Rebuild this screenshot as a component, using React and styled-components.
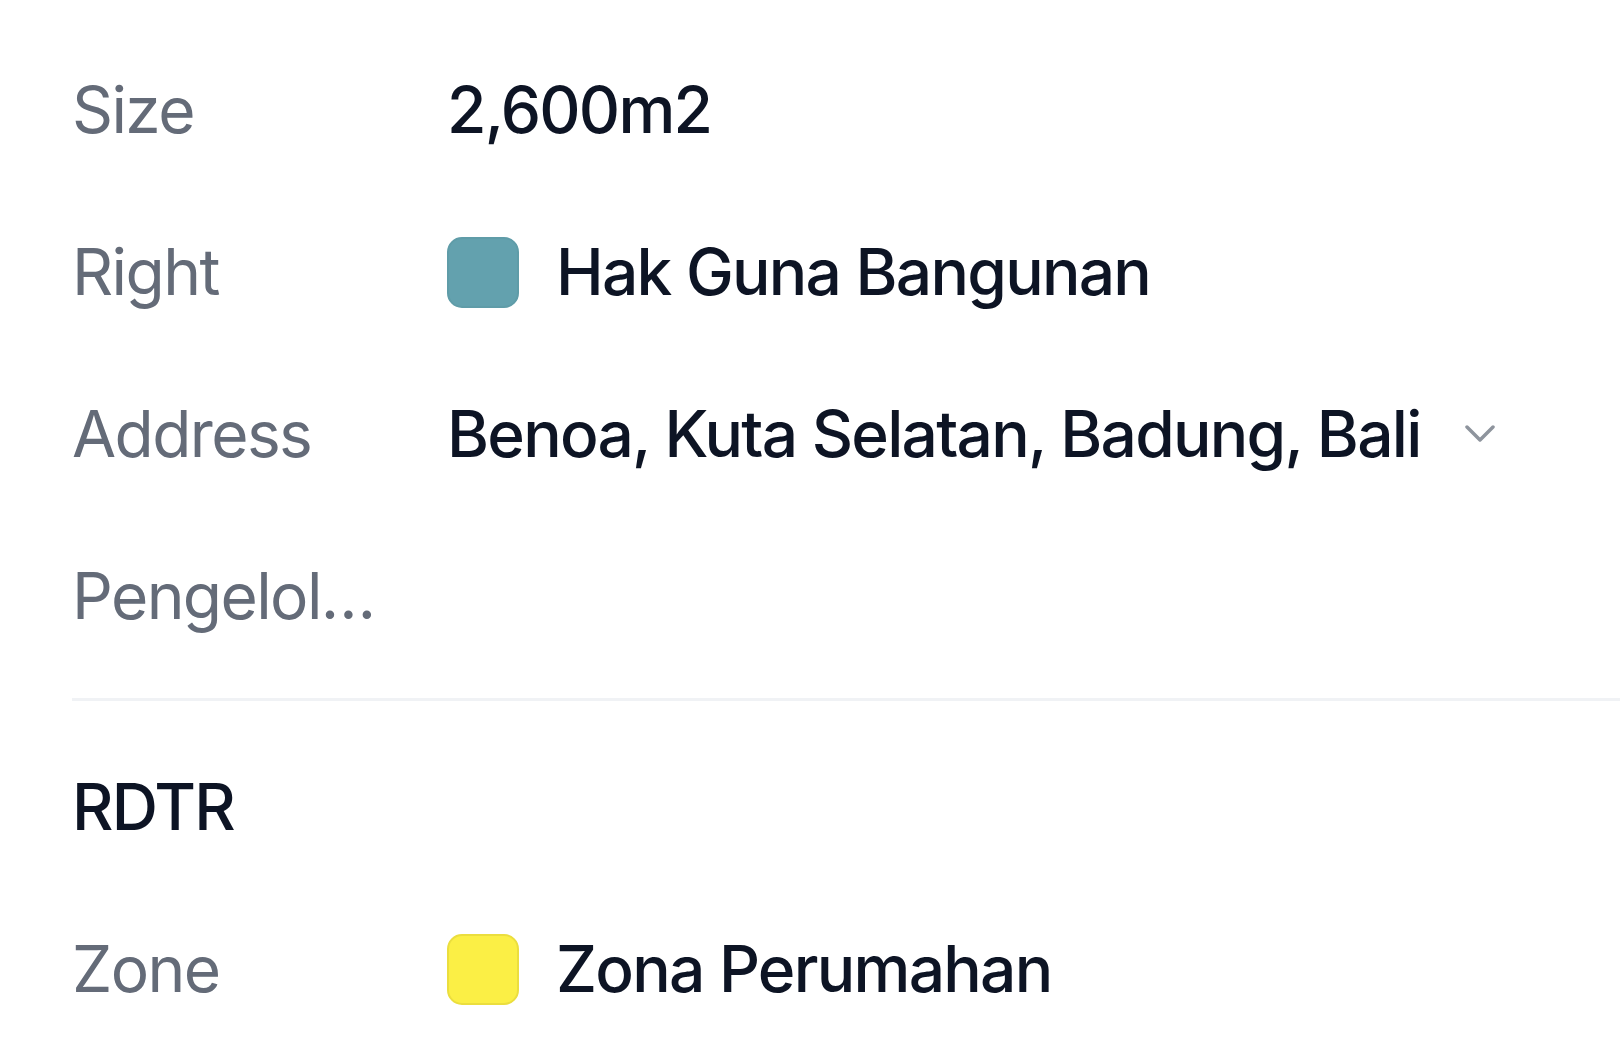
import React from "react";
import styled, { createGlobalStyle } from "styled-components";

const Global = createGlobalStyle`
  html, body { margin: 0; padding: 0; background: #ffffff; }
  body { font-family: Inter, "Noto Sans", "Liberation Sans", sans-serif; }
`;

const Panel = styled.div`
  padding: 29px 0 0 72px;
  display: flex;
  flex-direction: column;
`;

const Row = styled.div`
  display: grid;
  grid-template-columns: 310px 1fr;
  column-gap: 65px;
  align-items: center;
  height: 162px;
`;

const Label = styled.div`
  font-size: 64px;
  line-height: 80px;
  font-weight: 400;
  letter-spacing: -0.025em;
  color: #646b78;
  white-space: nowrap;
  overflow: hidden;
  text-overflow: ellipsis;
`;

const Value = styled.div`
  display: flex;
  align-items: center;
  gap: 37px;
  font-size: 64px;
  line-height: 80px;
  font-weight: 500;
  letter-spacing: -0.027em;
  color: #0d1424;
  white-space: nowrap;
`;

const Swatch = styled.span`
  flex: none;
  width: 72px;
  height: 71px;
  border-radius: 15px;
  box-sizing: border-box;
  background: ${(p) => p.$color};
  border: 2px solid ${(p) => p.$border};
`;

const Chevron = styled.svg`
  flex: none;
  width: 30px;
  height: 18px;
  margin-left: 7px;
`;

const Divider = styled.hr`
  border: none;
  height: 3px;
  background: #f0f2f5;
  margin: 21px 0 0 0;
`;

const Heading = styled.div`
  height: 162px;
  margin-top: 25px;
  display: flex;
  align-items: center;
  font-size: 64px;
  line-height: 80px;
  font-weight: 500;
  letter-spacing: -0.027em;
  color: #0d1424;
`;

export default function App() {
  return (
    <>
      <Global />
      <Panel>
        <Row>
          <Label>Size</Label>
          <Value>2,600m2</Value>
        </Row>
        <Row>
          <Label>Right</Label>
          <Value>
            <Swatch $color="#63a1ae" $border="#5f9ca8" />
            Hak Guna Bangunan
          </Value>
        </Row>
        <Row>
          <Label>Address</Label>
          <Value>
            Benoa, Kuta Selatan, Badung, Bali
            <Chevron viewBox="0 0 30 18" fill="none">
              <path
                d="M2 2 L15 15 L28 2"
                stroke="#8e949d"
                strokeWidth="3.5"
                strokeLinecap="round"
                strokeLinejoin="round"
              />
            </Chevron>
          </Value>
        </Row>
        <Row>
          <Label>Pengelola Aset</Label>
          <Value />
        </Row>
        <Divider />
        <Heading>RDTR</Heading>
        <Row>
          <Label>Zone</Label>
          <Value>
            <Swatch $color="#fbef45" $border="#ebde3e" />
            Zona Perumahan
          </Value>
        </Row>
      </Panel>
    </>
  );
}
